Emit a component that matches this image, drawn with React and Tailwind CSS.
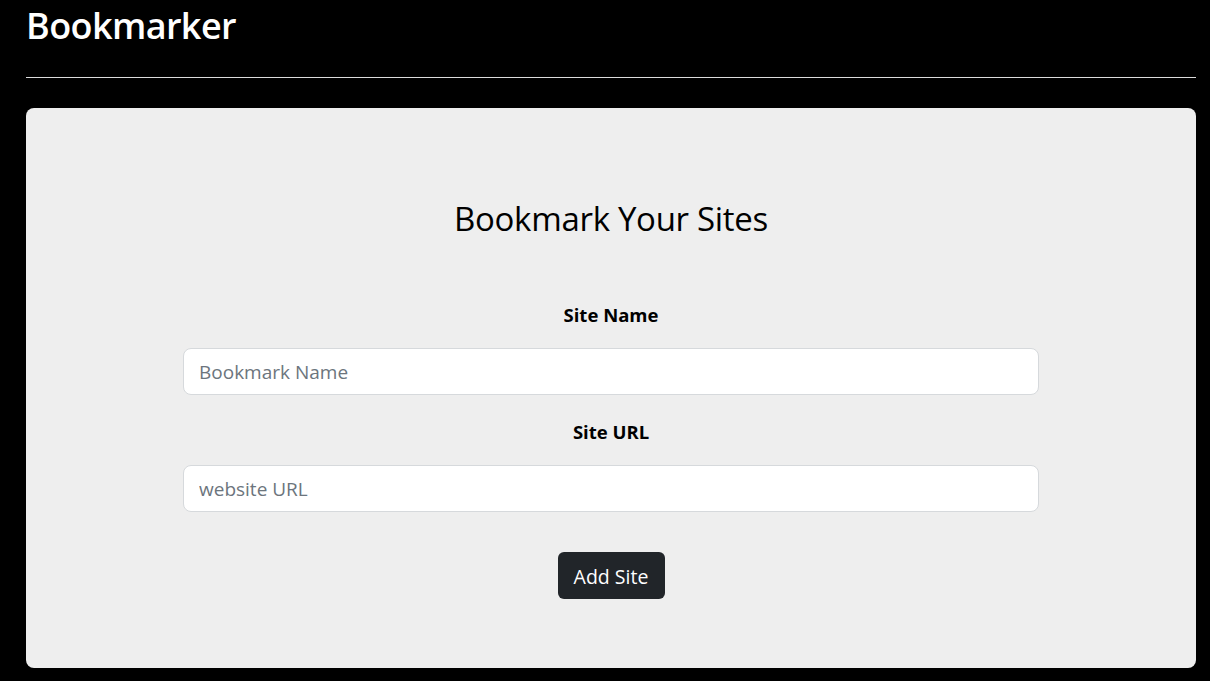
import React, { useState } from 'react';

const App = () => {
  const [site, setSite] = useState({ name: '', url: '' });

  return (
    <div
      className="min-h-[681px] bg-black pl-[26px] pr-[14px]"
      style={{ fontFamily: '"Open Sans", "Noto Sans", sans-serif' }}
    >
      <h1 className="pt-[4px] text-[36px] leading-[44px] font-semibold text-white tracking-[-0.6px]">Bookmarker</h1>
      <hr className="mt-[29px] border-0 h-px bg-[#dcdcdc]" />

      <div className="mt-[30px] h-[560px] rounded-lg bg-[#eeeeee] pt-[91px] flex flex-col items-center">
        <h2 className="text-[33px] leading-[40px] font-medium text-black tracking-[-0.3px]">Bookmark Your Sites</h2>

        <label className="mt-[62px] text-[18.5px] leading-[27px] font-bold text-black">Site Name</label>
        <input
          type="text"
          placeholder="Bookmark Name"
          value={site.name}
          onChange={(e) => setSite({ ...site, name: e.target.value })}
          className="mt-[20px] w-[856px] h-[47px] px-[15px] rounded-lg border border-[#d6d9dc] bg-white text-[19px] text-[#212529] placeholder:text-[#6c757d] outline-none"
        />

        <label className="mt-[23px] text-[18.5px] leading-[27px] font-bold text-black">Site URL</label>
        <input
          type="text"
          placeholder="website URL"
          value={site.url}
          onChange={(e) => setSite({ ...site, url: e.target.value })}
          className="mt-[20px] w-[856px] h-[47px] px-[15px] rounded-lg border border-[#d6d9dc] bg-white text-[19px] text-[#212529] placeholder:text-[#6c757d] outline-none"
        />

        <button
          type="button"
          className="mt-[40px] w-[107px] h-[47px] pt-[3px] rounded-md bg-[#212529] text-white text-[19.5px]"
        >
          Add Site
        </button>
      </div>
    </div>
  );
};

export default App;
